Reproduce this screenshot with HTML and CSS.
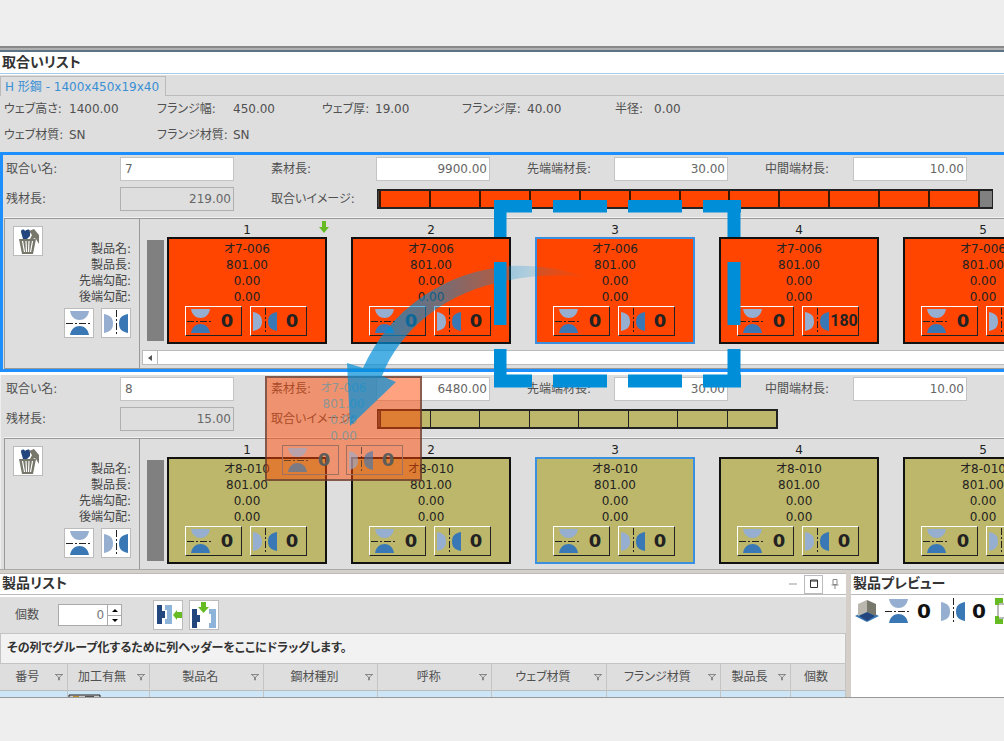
FILE: index.html
```
<!DOCTYPE html>
<html lang="ja">
    <head>
        <meta charset="utf-8" />
        <title>取合いリスト</title>
        <link rel="stylesheet" href="styles.css">
    </head>
    <body>
        <svg class="defs" aria-hidden="true">
            <symbol id="flip" viewBox="0 0 26 26">
                <path class="light" d="M4 1h19c-1 6-5 9-9.500 9S5 7 4 1z"/>
                <path d="M4 25h19c-1-6-5-9-9.500-9S5 19 4 25z" fill="#3a78b5"/>
                <path d="M0 13.500h26" stroke="#222" stroke-dasharray="7 2 2 2" fill="none"/>
            </symbol>
            <symbol id="mirror" viewBox="0 0 26 26">
                <path class="light" d="M1 4c6 1 9 4 9 9.500s-3 8.500-9 9.500z"/>
                <path d="M25 4c-6 1-9 4-9 9.500s3 8.500 9 9.500z" fill="#3a78b5"/>
                <path d="M13.500 0v26" stroke="#222" stroke-dasharray="7 2 2 2" fill="none"/>
            </symbol>
            <symbol id="trash" viewBox="0 0 28 28">
                <path d="M7 5c0-3 3-3 4-1 1-1 5-3 5 1v4l-3 3H9z" fill="#23467f"/>
                <path d="M15 4l5-2 5 6v9l-3-5-2-1-2 4-3-1 3-6z" fill="#77776c"/>
                <path d="M5 12h17l-3 15H8z" fill="#77776c"/>
                <path d="M8.500 14l2 11M12 14l.5 11M15 14l-.5 11M18.500 14l-2 11" stroke="#fff" stroke-width="1.200"/>
            </symbol>
        </svg>

        <main class="app">
            <section class="fit-list">
                <h1 class="title">取合いリスト</h1>
                <div class="tabs"><button class="tab">H 形鋼 - 1400x450x19x40</button></div>
                <div class="props">
                    <span>ウェブ高さ:</span><span>1400.00</span>
                    <span>フランジ幅:</span><span>450.00</span>
                    <span>ウェブ厚:</span><span>19.00</span>
                    <span>フランジ厚:</span><span>40.00</span>
                    <span>半径:</span><span>0.00</span>
                    <span>ウェブ材質:</span><span>SN</span>
                    <span>フランジ材質:</span><span>SN</span>
                </div>
                <div id="groups"></div>
            </section>

            <div class="bottom">
                <section class="products">
                    <header class="title">
                        <h2>製品リスト</h2>
                        <button class="win" aria-label="最小化"><svg width="10" height="10"><path d="M1 5h8" stroke="#999"/></svg></button>
                        <button class="win boxed" aria-label="最大化"><svg width="10" height="10"><path d="M1.500 1h7v7.500h-7zM1 2h8" stroke="#333" fill="none"/></svg></button>
                        <button class="win" aria-label="固定"><svg width="10" height="12"><path d="M3 1.500h4v5H3zM1.500 7h7M5 7v4" stroke="#888" fill="none"/></svg></button>
                    </header>
                    <div class="toolbar">
                        <label for="count">個数</label>
                        <span class="spin">
                            <input id="count" type="text" value="0">
                            <span class="arrows">
                                <button aria-label="増やす"><svg width="6" height="4"><path d="M0 4l3-3 3 3z"/></svg></button>
                                <button aria-label="減らす"><svg width="6" height="4"><path d="M0 0l3 3 3-3z"/></svg></button>
                            </span>
                        </span>
                        <button class="icon" aria-label="末尾に追加"><svg width="28" height="28">
                            <path d="M3 4h5v6h3v7H8v6H3z" fill="#23467f"/>
                            <path d="M11 4h7v19h-7v-5h2V9h-2z" fill="#8fb4d9"/>
                            <path d="M19 14l4-5v2h5v6h-5v2z" fill="#6b2"/>
                        </svg></button>
                        <button class="icon" aria-label="間に挿入"><svg width="28" height="28">
                            <path d="M2 8h5v6h3v7H7v6H2z" fill="#23467f"/>
                            <path d="M19 8h7v19h-7v-5h2v-9h-2z" fill="#8fb4d9"/>
                            <path d="M11 1h5v5h3l-5.500 6L8 6h3z" fill="#6b2"/>
                        </svg></button>
                    </div>
                    <p class="group-hint">その列でグループ化するために列ヘッダーをここにドラッグします。</p>
                    <table class="grid">
                        <colgroup>
                            <col class="c-no"><col class="c-work"><col class="c-wide"><col class="c-wide"><col class="c-wide"><col class="c-wide"><col class="c-wide"><col class="c-len"><col class="c-count">
                        </colgroup>
                        <thead><tr id="heads"></tr></thead>
                        <tbody><tr>
                            <td></td>
                            <td><svg width="33" height="12"><path d="M1 1h31v11H1z" fill="#ccc" stroke="#222"/><path d="M5 2h6v10H5z" fill="#b8902c"/><path d="M17 2h9v10h-9z" fill="#555"/></svg></td>
                            <td></td><td></td><td></td><td></td><td></td><td></td><td></td>
                        </tr></tbody>
                    </table>
                </section>
                <section class="preview">
                    <header class="title"><h2>製品プレビュー</h2></header>
                    <div class="preview-bar">
                        <svg width="24" height="24"><path d="M0 17l12-6 12 6-12 6z" fill="#3a78b5"/><path d="M4 17l8-4 8 4-8 5z" fill="#23467f"/><path d="M3 5l9-4v12l-9 4z" fill="#b9b7ae"/><path d="M12 1l9 4v12l-9-4z" fill="#77776c"/></svg>
                        <svg width="26" height="26"><use href="#flip"/></svg><b>0</b>
                        <svg width="26" height="26"><use href="#mirror"/></svg><b>0</b>
                        <svg width="26" height="26"><path d="M3 6v14h16V6z" fill="none" stroke="#777"/><path d="M0 0h8v5H4v2H0zM0 26h8v-5H4v-3H0z" fill="#6b2"/></svg>
                    </div>
                </section>
            </div>

            <div class="ghost" id="ghost"></div>
            <svg class="overlay" width="260" height="240" viewBox="340 190 260 240" aria-hidden="true">
                <defs>
                    <linearGradient id="fade" gradientUnits="userSpaceOnUse" x1="587" y1="0" x2="395" y2="0">
                        <stop offset="0" stop-color="#008ed9" stop-opacity="0"/>
                        <stop offset="1" stop-color="#008ed9" stop-opacity=".7"/>
                    </linearGradient>
                </defs>
                <path d="M590 278C560 267 530 265 510 266C445 271 390 309 363 368L347 363L350 426L396 382L382 376C400 330 445 291 510 280C535 275 560 274 590 278z" fill="url(#fade)"/>
            </svg>
            <svg class="marquee" width="247" height="188" aria-hidden="true">
                <path d="M0 6h38M59 6h54M134 6h54M209 6h38M0 181h38M59 181h54M134 181h54M209 181h38M6 0v37M6 62v63M6 149v38M240 0v37M240 62v63M240 149v38" stroke="#008ed9" stroke-width="13" fill="none"/>
            </svg>
        </main>

        <script>
            var groups = [
                { no: '7', rest: '219.00', len: '9900.00', name: 'オ7-006', color: 'orange', parts: 12, angles: [0, 0, 0, 180, 0], active: true },
                { no: '8', rest: '15.00', len: '6480.00', name: 'オ8-010', color: 'olive', parts: 8, angles: [0, 0, 0, 0, 0] }
            ];

            function icon(id) {
                return '<svg width="26" height="26"><use href="#' + id + '"/></svg>';
            }

            function cardBody(name, angle) {
                return '<p>' + name + '</p><p>801.00</p><p>0.00</p><p>0.00</p>' +
                    '<div class="turns"><button>' + icon('flip') + '<b>0</b></button>' +
                    '<button>' + icon('mirror') + '<b' + (angle ? ' class="narrow"' : '') + '>' + angle + '</b></button></div>';
            }

            function field(id, label, value, cls) {
                return '<label for="' + id + '">' + label + ':</label>' +
                    '<input id="' + id + '" type="text" value="' + value + '"' + (cls ? ' class="' + cls + '"' : '') +
                    (cls === 'locked' ? ' readonly' : '') + '>';
            }

            document.getElementById('groups').innerHTML = groups.map(function(g) {
                var n = g.no;
                var bar = '<i class="head"></i>' + '<i></i>'.repeat(g.parts) + (g.active ? '<i class="rest"></i>' : '');
                var slots = g.angles.map(function(angle, i) {
                    return '<div class="slot"><span class="num">' + (i + 1) + '</span>' +
                        (g.active && i === 0 ? '<svg class="drop" width="10" height="12"><path d="M3 0h4v6h3l-5 6-5-6h3z" fill="#6b2"/></svg>' : '') +
                        '<div class="card ' + g.color + (i === 2 ? ' selected' : '') + '">' + cardBody(g.name, angle) + '</div></div>';
                }).join('');
                return '<article class="group' + (g.active ? ' active' : '') + '">' +
                    '<div class="fields">' +
                    field('name' + n, '取合い名', n, 'text') + field('len' + n, '素材長', g.len) +
                    field('lead' + n, '先端端材長', '30.00') + field('mid' + n, '中間端材長', '10.00') +
                    field('rest' + n, '残材長', g.rest, 'locked') +
                    '<span class="bar-label">取合いイメージ:</span><div class="bar ' + g.color + '">' + bar + '</div></div>' +
                    '<div class="panes"><div class="side"><button class="icon" aria-label="削除"><svg width="28" height="28"><use href="#trash"/></svg></button>' +
                    '<div class="side-labels"><p>製品名:</p><p>製品長:</p><p>先端勾配:</p><p>後端勾配:</p>' +
                    '<div class="side-buttons"><button class="icon" aria-label="上下反転">' + icon('flip') + '</button><button class="icon" aria-label="左右反転">' + icon('mirror') + '</button></div></div></div>' +
                    '<div class="track"><div class="slots"><div class="stopper"></div>' + slots + '</div>' +
                    (g.active ? '<div class="scroll"><button aria-label="左へ"><svg width="4" height="6"><path d="M4 0v6L0 3z" fill="#555"/></svg></button></div>' : '') +
                    '</div></div></article>';
            }).join('');

            document.getElementById('ghost').innerHTML = cardBody('オ7-006', 0);

            document.getElementById('heads').innerHTML =
                ['番号', '加工有無', '製品名', '鋼材種別', '呼称', 'ウェブ材質', 'フランジ材質', '製品長', '個数'].map(function(h, i) {
                    return '<th><div>' + '<span>' + h + '</span>' +
                        (i < 8 ? '<svg width="8" height="8"><path d="M0 1.500h8M1 2l2.500 2v3h1V4L7 2" fill="none" stroke="#888"/></svg>' : '') + '</div></th>';
                }).join('');
        </script>
    </body>
</html>
```
FILE: styles.css
```
* {
    box-sizing: border-box;
}
body {
    margin: 0;
    padding-top: 46px;
    overflow: hidden;
    background: #eee;
    color: #505050;
    font: 12px/16px "DejaVu Sans", "Noto Sans CJK JP", sans-serif;
    font-feature-settings: "palt";
}
p, h1, h2 {
    margin: 0;
}
button, input {
    margin: 0;
    padding: 0;
    border: 0;
    background: none;
    color: inherit;
    font: inherit;
    font-feature-settings: inherit;
}
svg {
    display: block;
    flex: none;
}
.defs {
    position: absolute;
    width: 0;
    height: 0;
}
.light {
    fill: #96aed0;
}
.app {
    position: relative;
    overflow: hidden;
    border-top: 2px solid #888;
    border-bottom: 1px solid #999;
    background: #dedede;
}
.fit-list {
    border-top: 2px solid #b0b0b0;
    border-bottom: 1px solid #aaa;
}
.title {
    display: flex;
    align-items: center;
    height: 22px;
    padding-left: 2px;
    border-top: 1px solid #bbb;
    border-bottom: 1px solid #bbb;
    background: #fff;
    color: #333;
    font-size: 14px;
    font-weight: bold;
}
h1.title {
    height: 24px;
    padding-bottom: 2px;
    border-top: 2px solid #5b7385;
    border-bottom-color: #a6cbe6;
}
.title h2 {
    flex: 1;
    padding-bottom: 2px;
    font-size: 14px;
    white-space: nowrap;
}
.tabs {
    display: flex;
    height: 22px;
    padding-top: 1px;
    border-top: 1px solid #fff;
}
.tabs::after {
    content: "";
    flex: 1;
    border-bottom: 1px solid #bbb;
}
.tab {
    width: 166px;
    padding-left: 4px;
    border: 1px solid #bbb;
    border-bottom: 0;
    color: #3a8fd4;
    text-align: left;
    white-space: nowrap;
}
.props {
    display: grid;
    grid-template-columns: 65px 88px 76px 89px 53px 87px 65px 88px 39px 1fr;
    grid-auto-rows: 26px;
    align-items: center;
    padding: 0 0 4px 4px;
    white-space: nowrap;
}
.group {
    padding-left: 3px;
    border-left: 1px solid #eee;
}
.group.active {
    margin-bottom: 3px;
    padding-left: 1px;
    border: 3px solid #1e8fff;
    border-right: 0;
    box-shadow: 0 3px #fff;
}
.fields {
    display: grid;
    grid-template-columns: 114px 151px 105px 151px 87px 151px 88px 114px;
    grid-auto-rows: 24px;
    row-gap: 6px;
    align-items: center;
    padding: 2px 0 7px 2px;
}
.fields input {
    width: 114px;
    height: 24px;
    padding: 0 2px;
    border: 1px solid #c4c4c4;
    background: #fff;
    color: #666;
    text-align: right;
}
.fields .text {
    padding-left: 4px;
    text-align: left;
}
.fields .locked {
    border-color: #b0b0b0;
    background: #dedede;
}
.bar {
    display: flex;
    grid-column: 4 / -1;
    justify-self: start;
    width: 616px;
    height: 20px;
    margin-left: 1px;
    border: solid #222;
    border-width: 2px 1px;
}
.bar i {
    flex: 1;
    border-right: 2px solid #3a1800;
}
.bar .head {
    flex: none;
    width: 3px;
    background: #444;
}
.bar .rest {
    flex: none;
    width: 12px;
    border: 0;
    background: #808080;
}
.bar.olive {
    width: 401px;
}
.bar.olive i {
    border-right-width: 1px;
    border-color: #222;
}
.orange {
    background: #ff4500;
}
.olive {
    background: #bdb76b;
}
.panes {
    display: flex;
    border-top: 1px solid #999;
    box-shadow: 0 -1px #f2f2f2;
}
.active .panes {
    border-bottom: 1px solid #999;
}
.side {
    display: flex;
    justify-content: space-between;
    flex: none;
    width: 136px;
    padding: 7px 8px 0 8px;
    border-left: 1px solid #999;
    border-right: 1px solid #999;
    color: #444;
}
.icon {
    display: flex;
    align-items: center;
    justify-content: center;
    width: 30px;
    height: 30px;
    border: 1px solid #bbb;
    background: #fff;
}
.side-labels {
    padding-top: 15px;
    text-align: right;
}
.side-buttons {
    display: flex;
    gap: 7px;
    margin-top: 3px;
}
.track {
    flex: 1;
    min-width: 0;
    padding: 4px 0 3px 2px;
}
.slots {
    display: flex;
    gap: 24px;
    padding: 0 0 2px 5px;
}
.stopper {
    flex: none;
    width: 17px;
    margin: 17px -21px 3px 0;
    background: #808080;
}
.slot {
    position: relative;
    flex: none;
    width: 160px;
    text-align: center;
    color: #222;
}
.num {
    display: block;
    line-height: 14px;
}
.drop {
    position: absolute;
    top: -2px;
    right: -2px;
}
.card {
    height: 107px;
    padding: 2px 16px;
    border: 2px solid #111;
}
.card.selected {
    border-color: #3a8fe0;
}
.turns {
    display: flex;
    gap: 8px;
    margin-top: 1px;
}
.turns button {
    display: flex;
    align-items: center;
    width: 57px;
    height: 30px;
    padding-left: 1px;
    border: 1px solid #222;
    border-top-color: #fff;
    border-left-color: #fff;
}
.turns b {
    flex: 1;
    font: bold 18px/28px "DejaVu Sans", sans-serif;
}
.turns .narrow {
    font: bold 16px/28px Roboto, sans-serif;
}
.scroll {
    height: 15px;
    margin-top: 4px;
    border: 1px solid #bbb;
    border-right: 0;
    background: #fff;
}
.scroll button {
    display: flex;
    align-items: center;
    justify-content: center;
    width: 15px;
    height: 13px;
    border-right: 1px solid #bbb;
}
.bottom {
    display: flex;
    gap: 5px;
    height: 127px;
    padding-top: 3px;
    background: #d4cfc8;
}
.products {
    flex: 1;
    min-width: 0;
    overflow: hidden;
    background: #dedede;
}
.preview {
    flex: none;
    width: 153px;
    overflow: hidden;
    background: #fff;
}
.win {
    display: flex;
    align-items: center;
    justify-content: center;
    width: 19px;
    height: 19px;
    margin-right: 2px;
}
.boxed {
    border: 1px solid #bbb;
}
.toolbar {
    display: flex;
    align-items: center;
    height: 38px;
    padding: 0 0 0 15px;
    border-top: 2px solid #fff;
}
.spin {
    display: flex;
    width: 64px;
    height: 22px;
    margin: 0 31px 0 19px;
    border: 1px solid #aaa;
    background: #fff;
}
.spin input {
    width: 48px;
    padding-right: 3px;
    color: #777;
    text-align: right;
}
.arrows {
    flex: 1;
    border-left: 1px solid #aaa;
}
.arrows button {
    display: flex;
    align-items: center;
    justify-content: center;
    width: 100%;
    height: 10px;
}
.arrows button + button {
    border-top: 1px solid #aaa;
}
.toolbar .icon + .icon {
    margin-left: 6px;
}
.group-hint {
    height: 31px;
    padding-left: 6px;
    border: 1px solid #c4c4c4;
    background: #f2f2f2;
    color: #333;
    font-weight: bold;
    line-height: 29px;
    white-space: nowrap;
}
.grid {
    width: 100%;
    border-collapse: collapse;
    table-layout: fixed;
}
.c-no {
    width: 67px;
}
.c-work {
    width: 82px;
}
.c-wide {
    width: auto;
}
.c-len {
    width: 70px;
}
.c-count {
    width: 55px;
}
.grid th, .grid td {
    height: 26px;
    padding: 0;
    border-right: 1px solid #c4c4c4;
    font-weight: normal;
}
.grid th div {
    display: flex;
    align-items: center;
    padding-right: 4px;
}
.grid th span {
    flex: 1;
}
.grid td {
    padding-top: 3px;
    border-top: 1px solid #bbb;
    background: #cce6f8;
    vertical-align: top;
}
.preview-bar {
    display: flex;
    align-items: center;
    gap: 6px;
    padding: 3px 0 0 4px;
    color: #111;
}
.preview-bar b {
    width: 16px;
    margin-right: 3px;
    font: bold 20px/26px "DejaVu Sans", sans-serif;
    text-align: center;
}
.ghost {
    position: absolute;
    top: 328px;
    left: 265px;
    width: 157px;
    height: 105px;
    padding: 2px 15px;
    border: 2px solid rgba(60, 50, 50, .6);
    background: rgba(255, 69, 0, .5);
    color: #8c9696;
    text-align: center;
}
.ghost .turns {
    gap: 7px;
}
.ghost .turns button {
    border-color: #a07060;
}
.ghost .turns svg {
    opacity: .6;
}
.ghost .turns b {
    color: #5c5c58;
}
.overlay {
    position: absolute;
    top: 142px;
    left: 340px;
}
.marquee {
    position: absolute;
    top: 152px;
    left: 494px;
}
```
